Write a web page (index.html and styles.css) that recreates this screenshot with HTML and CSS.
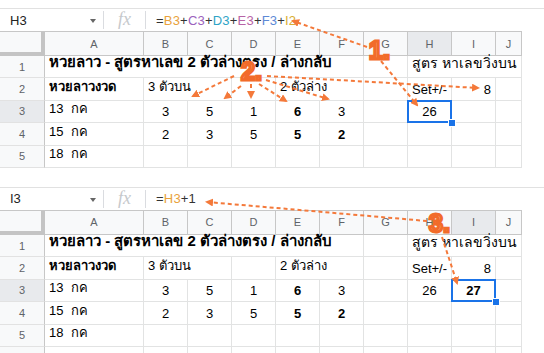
FILE: index.html
```html
<!DOCTYPE html>
<html lang="th">
<head>
  <meta charset="UTF-8">
  <title>สูตรหาเลข</title>
  <link rel="stylesheet" href="styles.css">
</head>
<body>
  <div class="shot shot-first">
    <div class="edge"></div>
    <div class="fbar">
      <div class="namebox">H3<span class="caret"></span></div>
      <div class="fx">fx</div>
      <div class="formula">=<span class="ref-b">B3</span>+<span class="ref-c">C3</span>+<span class="ref-d">D3</span>+<span class="ref-e">E3</span>+<span class="ref-f">F3</span>+<span class="ref-i">I2</span></div>
    </div>
    <div class="sheet">
      <div class="corner"></div>
      <div class="ch">A</div><div class="ch">B</div><div class="ch">C</div><div class="ch">D</div><div class="ch">E</div>
      <div class="ch">F</div><div class="ch">G</div><div class="ch hl">H</div><div class="ch">I</div><div class="ch">J</div>

      <div class="rh">1</div>
      <div class="c title span6">หวยลาว - สูตรหาเลข 2 ตัวล่างตรง / ล่างกลับ</div>
      <div class="c"></div>
      <div class="c title-plain span3">สูตร หาเลขวิ่งบน</div>

      <div class="rh">2</div>
      <div class="c b">หวยลาวงวด</div>
      <div class="c span2">3 ตัวบน</div>
      <div class="c"></div>
      <div class="c span2">2 ตัวล่าง</div>
      <div class="c"></div>
      <div class="c">Set+/-</div>
      <div class="c r">8</div>
      <div class="c"></div>

      <div class="rh hl">3</div>
      <div class="c">13  กค</div>
      <div class="c m">3</div><div class="c m">5</div><div class="c m">1</div>
      <div class="c m b">6</div><div class="c m">3</div>
      <div class="c"></div>
      <div class="c m sel">26</div>
      <div class="c"></div><div class="c"></div>

      <div class="rh">4</div>
      <div class="c">15  กค</div>
      <div class="c m">2</div><div class="c m">3</div><div class="c m">5</div>
      <div class="c m b">5</div><div class="c m b">2</div>
      <div class="c"></div><div class="c"></div><div class="c"></div><div class="c"></div>

      <div class="rh">5</div>
      <div class="c">18  กค</div>
      <div class="c"></div><div class="c"></div><div class="c"></div><div class="c"></div><div class="c"></div>
      <div class="c"></div><div class="c"></div><div class="c"></div><div class="c"></div>
    </div>
  </div>

  <div class="shot shot-second">
    <div class="edge"></div>
    <div class="fbar">
      <div class="namebox">I3<span class="caret"></span></div>
      <div class="fx">fx</div>
      <div class="formula">=<span class="ref-b">H3</span>+1</div>
    </div>
    <div class="sheet">
      <div class="corner"></div>
      <div class="ch">A</div><div class="ch">B</div><div class="ch">C</div><div class="ch">D</div><div class="ch">E</div>
      <div class="ch">F</div><div class="ch">G</div><div class="ch">H</div><div class="ch hl">I</div><div class="ch">J</div>

      <div class="rh">1</div>
      <div class="c title span6">หวยลาว - สูตรหาเลข 2 ตัวล่างตรง / ล่างกลับ</div>
      <div class="c"></div>
      <div class="c title-plain span3">สูตร หาเลขวิ่งบน</div>

      <div class="rh">2</div>
      <div class="c b">หวยลาวงวด</div>
      <div class="c span2">3 ตัวบน</div>
      <div class="c"></div>
      <div class="c span2">2 ตัวล่าง</div>
      <div class="c"></div>
      <div class="c">Set+/-</div>
      <div class="c r">8</div>
      <div class="c"></div>

      <div class="rh hl">3</div>
      <div class="c">13  กค</div>
      <div class="c m">3</div><div class="c m">5</div><div class="c m">1</div>
      <div class="c m b">6</div><div class="c m">3</div>
      <div class="c"></div>
      <div class="c m">26</div>
      <div class="c m b sel">27</div>
      <div class="c"></div>

      <div class="rh">4</div>
      <div class="c">15  กค</div>
      <div class="c m">2</div><div class="c m">3</div><div class="c m">5</div>
      <div class="c m b">5</div><div class="c m b">2</div>
      <div class="c"></div><div class="c"></div><div class="c"></div><div class="c"></div>

      <div class="rh">5</div>
      <div class="c">18  กค</div>
      <div class="c"></div><div class="c"></div><div class="c"></div><div class="c"></div><div class="c"></div>
      <div class="c"></div><div class="c"></div><div class="c"></div><div class="c"></div>

      <div class="rh"></div>
      <div class="c"></div>
      <div class="c"></div><div class="c"></div><div class="c"></div><div class="c"></div><div class="c"></div>
      <div class="c"></div><div class="c"></div><div class="c"></div><div class="c"></div>
    </div>
  </div>

  <svg class="notes" width="544" height="353" viewBox="0 0 544 353">
    <defs>
      <marker id="tip" markerWidth="8" markerHeight="8" refX="6" refY="4" orient="auto" markerUnits="userSpaceOnUse">
        <path d="M0,0 L8,4 L0,8 z" fill="#f4793a"/>
      </marker>
    </defs>
    <!-- 1. -->
    <line class="dash" x1="367" y1="47" x2="293" y2="21" marker-end="url(#tip)"/>
    <line class="dash" x1="381" y1="61" x2="417" y2="105" marker-end="url(#tip)"/>
    <text class="tag" x="369" y="59">1.</text>
    <!-- 2. -->
    <line class="dash" x1="234" y1="76" x2="193" y2="96" marker-end="url(#tip)"/>
    <line class="dash" x1="241" y1="86" x2="225" y2="98" marker-end="url(#tip)"/>
    <line class="dash" x1="251" y1="84" x2="251" y2="97" marker-end="url(#tip)"/>
    <line class="dash" x1="259" y1="84" x2="286" y2="101" marker-end="url(#tip)"/>
    <line class="dash" x1="266" y1="80" x2="328" y2="99" marker-end="url(#tip)"/>
    <line class="dash" x1="267" y1="76" x2="478" y2="88" marker-end="url(#tip)"/>
    <text class="tag" x="241" y="80">2.</text>
    <!-- 3. -->
    <line class="dash" x1="427" y1="221" x2="207" y2="202" marker-end="url(#tip)"/>
    <line class="dash" x1="442" y1="237" x2="457" y2="283" marker-end="url(#tip)"/>
    <text class="tag" x="429" y="232">3.</text>
  </svg>
</body>
</html>
```

FILE: styles.css
```css
body {
  margin: 0;
  width: 544px;
  height: 353px;
  overflow: hidden;
  position: relative;
  background-color: #fff;
  font-family: "Liberation Sans", Arial, sans-serif;
  color: #000;
}

.shot-first {
  padding-top: 8px;
}

.shot-second {
  margin-top: 19px;
}

.edge {
  border-top: 1px solid #e1e1e1;
}

.fbar {
  display: flex;
  align-items: center;
  height: 22px;
  font-size: 13px;
}

.namebox {
  position: relative;
  display: flex;
  align-items: center;
  width: 104px;
  height: 18px;
  padding-left: 10px;
  box-sizing: border-box;
  border-right: 1px solid #dadce0;
  color: #222;
}

.caret {
  position: absolute;
  right: 7px;
  top: 8px;
  border-left: 3px solid transparent;
  border-right: 3px solid transparent;
  border-top: 4px solid #666;
}

.fx {
  width: 42px;
  height: 18px;
  box-sizing: border-box;
  border-right: 1px solid #dadce0;
  text-align: center;
  font-family: "Liberation Serif", serif;
  font-style: italic;
  font-size: 18px;
  line-height: 16px;
  color: #c6c9cc;
}

.formula {
  padding-left: 10px;
  color: #333;
  letter-spacing: 0.2px;
}

.ref-b { color: #e9a23b; }
.ref-c { color: #9b62bd; }
.ref-d { color: #2ea4c6; }
.ref-e { color: #b763a6; }
.ref-f { color: #5d89d6; }
.ref-i { color: #d9ae34; }

.sheet {
  display: grid;
  grid-template-columns: 45px 99px repeat(8, 44px) 26px;
  grid-template-rows: 24px;
  grid-auto-rows: 22.4px;
  width: 522px;
  border-top: 1px solid #c7c7c7;
}

.corner {
  background-color: #f8f9fa;
  border-right: 4px solid #c4c4c4;
  border-bottom: 4px solid #c4c4c4;
}

.ch {
  display: flex;
  align-items: center;
  justify-content: center;
  background-color: #f8f9fa;
  border-right: 1px solid #c7c7c7;
  border-bottom: 1px solid #c7c7c7;
  font-size: 11px;
  color: #5f6368;
}

.rh {
  display: flex;
  align-items: center;
  justify-content: center;
  background-color: #f8f9fa;
  border-right: 1px solid #c7c7c7;
  border-bottom: 1px solid #e2e2e2;
  font-size: 11px;
  color: #5f6368;
}

.hl {
  background-color: #e8eaed;
}

.c {
  display: flex;
  align-items: flex-end;
  padding: 0 4px 3px;
  border-right: 1px solid #e2e3e3;
  border-bottom: 1px solid #e2e3e3;
  font-size: 13px;
  white-space: pre;
  overflow: visible;
}

.m {
  justify-content: center;
}

.r {
  justify-content: flex-end;
}

.b {
  font-weight: bold;
}

.title {
  font-size: 15px;
  font-weight: bold;
}

.title-plain {
  font-size: 14px;
}

.span2 { grid-column: span 2; }
.span3 { grid-column: span 3; }
.span6 { grid-column: span 6; }

.sel {
  position: relative;
}

.sel::after {
  content: "";
  position: absolute;
  left: -1px;
  top: -1px;
  right: -1px;
  bottom: -1px;
  border: 2px solid #1a73e8;
}

.sel::before {
  content: "";
  position: absolute;
  right: -5px;
  bottom: -5px;
  width: 6px;
  height: 6px;
  background-color: #1a73e8;
  border: 1px solid #fff;
  z-index: 1;
}

.notes {
  position: absolute;
  left: 0;
  top: 0;
}

.dash {
  stroke: #f4793a;
  stroke-width: 2;
  stroke-dasharray: 4 3;
}

.tag {
  font-family: "Liberation Sans", Arial, sans-serif;
  font-size: 25px;
  font-weight: bold;
  fill: #f9b58c;
  stroke: #f26b2a;
  stroke-width: 3;
  paint-order: fill;
}
```
